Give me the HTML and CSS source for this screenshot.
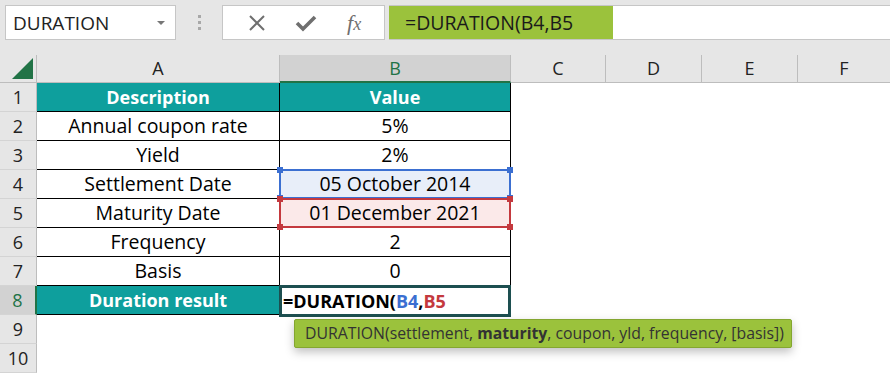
FILE: index.html
```html
<!DOCTYPE html>
<html lang="en">
<head>
    <meta charset="UTF-8">
    <title>DURATION</title>
    <link rel="stylesheet" href="styles.css">
</head>
<body>

    <div class="toolbar">
        <div class="namebox">
            <span>DURATION</span>
            <span class="caret"></span>
        </div>
        <div class="dots"><i></i><i></i><i></i></div>
        <div class="fxbox">
            <svg width="18" height="18" viewBox="0 0 18 18"><path d="M2 2 L16 16 M16 2 L2 16" stroke="#6f6f6f" stroke-width="2" fill="none"/></svg>
            <svg width="22" height="18" viewBox="0 0 22 18"><path d="M2 9 L8 15 L20 3" stroke="#6f6f6f" stroke-width="3.6" fill="none"/></svg>
            <span class="fx">f<sub>x</sub></span>
        </div>
        <div class="formula">
            <span class="formula-text">=DURATION(B4,B5</span>
        </div>
    </div>

    <div class="sheet">
        <div class="corner"><span class="tri"></span></div>
        <div class="col">A</div>
        <div class="col col-sel">B</div>
        <div class="col">C</div>
        <div class="col">D</div>
        <div class="col">E</div>
        <div class="col col-last">F</div>

        <div class="row">1</div>
        <div class="cell t head">Description</div>
        <div class="cell t head">Value</div>
        <div class="cell"></div><div class="cell"></div><div class="cell"></div><div class="cell"></div>

        <div class="row">2</div>
        <div class="cell t">Annual coupon rate</div>
        <div class="cell t">5%</div>
        <div class="cell"></div><div class="cell"></div><div class="cell"></div><div class="cell"></div>

        <div class="row">3</div>
        <div class="cell t">Yield</div>
        <div class="cell t">2%</div>
        <div class="cell"></div><div class="cell"></div><div class="cell"></div><div class="cell"></div>

        <div class="row">4</div>
        <div class="cell t">Settlement Date</div>
        <div class="cell t ref ref-blue">05 October 2014
            <i class="h tl"></i><i class="h tr"></i><i class="h bl"></i><i class="h br"></i>
        </div>
        <div class="cell"></div><div class="cell"></div><div class="cell"></div><div class="cell"></div>

        <div class="row">5</div>
        <div class="cell t">Maturity Date</div>
        <div class="cell t ref ref-red">01 December 2021
            <i class="h tl"></i><i class="h tr"></i><i class="h bl"></i><i class="h br"></i>
        </div>
        <div class="cell"></div><div class="cell"></div><div class="cell"></div><div class="cell"></div>

        <div class="row">6</div>
        <div class="cell t">Frequency</div>
        <div class="cell t">2</div>
        <div class="cell"></div><div class="cell"></div><div class="cell"></div><div class="cell"></div>

        <div class="row">7</div>
        <div class="cell t">Basis</div>
        <div class="cell t">0</div>
        <div class="cell"></div><div class="cell"></div><div class="cell"></div><div class="cell"></div>

        <div class="row row-sel">8</div>
        <div class="cell t head">Duration result</div>
        <div class="cell t active">=DURATION(<span class="blue">B4</span>,<span class="red">B5</span>
            <div class="tip">DURATION(settlement, <b>maturity</b>, coupon, yld, frequency, [basis])</div>
        </div>
        <div class="cell"></div><div class="cell"></div><div class="cell"></div><div class="cell"></div>

        <div class="row">9</div>
        <div class="cell"></div><div class="cell"></div>
        <div class="cell"></div><div class="cell"></div><div class="cell"></div><div class="cell"></div>

        <div class="row">10</div>
        <div class="cell"></div><div class="cell"></div>
        <div class="cell"></div><div class="cell"></div><div class="cell"></div><div class="cell"></div>
    </div>

</body>
</html>
```

FILE: styles.css
```css
/* Global */
* {
    margin: 0;
    padding: 0;
    box-sizing: border-box;
}
body {
    width: 890px;
    height: 374px;
    overflow: hidden;
    background: #ffffff;
    font-family: 'Open Sans', 'Noto Sans', sans-serif;
    color: #000;
}

/* Formula bar */
.toolbar {
    height: 55px;
    background: #e6e6e6;
    display: flex;
    align-items: flex-start;
    padding: 5px 0 0 5px;
}
.namebox {
    width: 171px;
    height: 35px;
    background: #fff;
    border: 1px solid #c6c6c6;
    display: flex;
    align-items: center;
    justify-content: space-between;
    padding: 0 10px 0 7px;
    font-size: 19px;
    color: #222;
}
.caret {
    width: 0;
    height: 0;
    border-left: 4px solid transparent;
    border-right: 4px solid transparent;
    border-top: 4px solid #777;
}
.dots {
    width: 46px;
    height: 35px;
    display: flex;
    flex-direction: column;
    align-items: center;
    justify-content: center;
    gap: 3px;
}
.dots i {
    width: 3px;
    height: 3px;
    background: #a8a8a8;
}
.fxbox {
    width: 163px;
    height: 35px;
    background: #fff;
    border: 1px solid #c6c6c6;
    display: flex;
    align-items: center;
    justify-content: space-around;
    padding: 0 8px 0 10px;
}
.fx {
    font-family: 'Liberation Serif', serif;
    font-style: italic;
    font-size: 22px;
    color: #6f6f6f;
    line-height: 1;
}
.fx sub {
    font-size: 18px;
    vertical-align: baseline;
}
.formula {
    flex: 1;
    height: 35px;
    margin-left: 4px;
    background: #fff;
    border-top: 1px solid #c6c6c6;
    border-bottom: 1px solid #c6c6c6;
    display: flex;
}
.formula-text {
    width: 224px;
    height: 33px;
    background: #9bc23c;
    font-size: 19.5px;
    color: #1a1a1a;
    line-height: 33px;
    padding-left: 16px;
}

/* Grid */
.sheet {
    position: relative;
    display: grid;
    grid-template-columns: 37px 243px 231px 95px 96px 96px 92px;
    grid-template-rows: 28px repeat(10, 29px);
    font-size: 19.5px;
}
.corner {
    background: #e6e6e6;
    border-right: 1px solid #bdbdbd;
    border-bottom: 1px solid #bdbdbd;
    position: relative;
}
.tri {
    position: absolute;
    right: 3px;
    bottom: 3px;
    width: 0;
    height: 0;
    border-left: 21px solid transparent;
    border-bottom: 21px solid #217346;
}
.col {
    background: #e6e6e6;
    border-right: 1px solid #bdbdbd;
    border-bottom: 1px solid #bdbdbd;
    text-align: center;
    line-height: 27px;
    font-size: 18px;
    color: #222;
}
.col-last {
    border-right: none;
}
.col-sel {
    background: #d2d2d2;
    border-bottom: 2px solid #217346;
    color: #217346;
}
.row {
    background: #e6e6e6;
    border-right: 1px solid #bdbdbd;
    border-bottom: 1px solid #d4d4d4;
    text-align: center;
    line-height: 28px;
    font-size: 18px;
    color: #222;
}
.row-sel {
    background: #d2d2d2;
    border-right: 2px solid #217346;
    color: #217346;
}
.cell {
    text-align: center;
    line-height: 28px;
    white-space: nowrap;
}
.t {
    border-right: 1px solid #000;
    border-bottom: 1px solid #000;
}
.head {
    background: #0e9f9d;
    color: #fff;
    font-weight: bold;
    font-size: 18px;
}

/* Referenced cells */
.ref {
    position: relative;
    line-height: 25px;
}
.ref-blue {
    background: #e8eef9;
    border: 2px solid #3b6fd1;
    margin: -1px 0 0 -1px;
}
.ref-red {
    background: #fbe9e9;
    border: 2px solid #c4393e;
    margin: -1px 0 0 -1px;
}
.h {
    position: absolute;
    width: 6px;
    height: 6px;
}
.ref-blue .h { background: #3b6fd1; }
.ref-red .h { background: #c4393e; }
.tl { left: -4px; top: -4px; }
.tr { right: -4px; top: -4px; }
.bl { left: -4px; bottom: -4px; }
.br { right: -4px; bottom: -4px; }

/* Active cell */
.active {
    position: relative;
    border: 3px solid #1d4f50;
    margin: -1px 0 -2px -1px;
    text-align: left;
    font-weight: bold;
    font-size: 18px;
    line-height: 26px;
    padding-left: 1px;
}
.blue { color: #3b6fd1; }
.red { color: #c4393e; }

.tip {
    position: absolute;
    left: 12px;
    top: 31px;
    width: 498px;
    height: 29px;
    background: #9bc23c;
    border: 1px solid #84a630;
    border-radius: 2px;
    box-shadow: 0 4px 10px rgba(0, 0, 0, 0.25);
    font-size: 15.8px;
    font-weight: normal;
    color: #333;
    line-height: 27px;
    padding-left: 10px;
    z-index: 2;
}
```
